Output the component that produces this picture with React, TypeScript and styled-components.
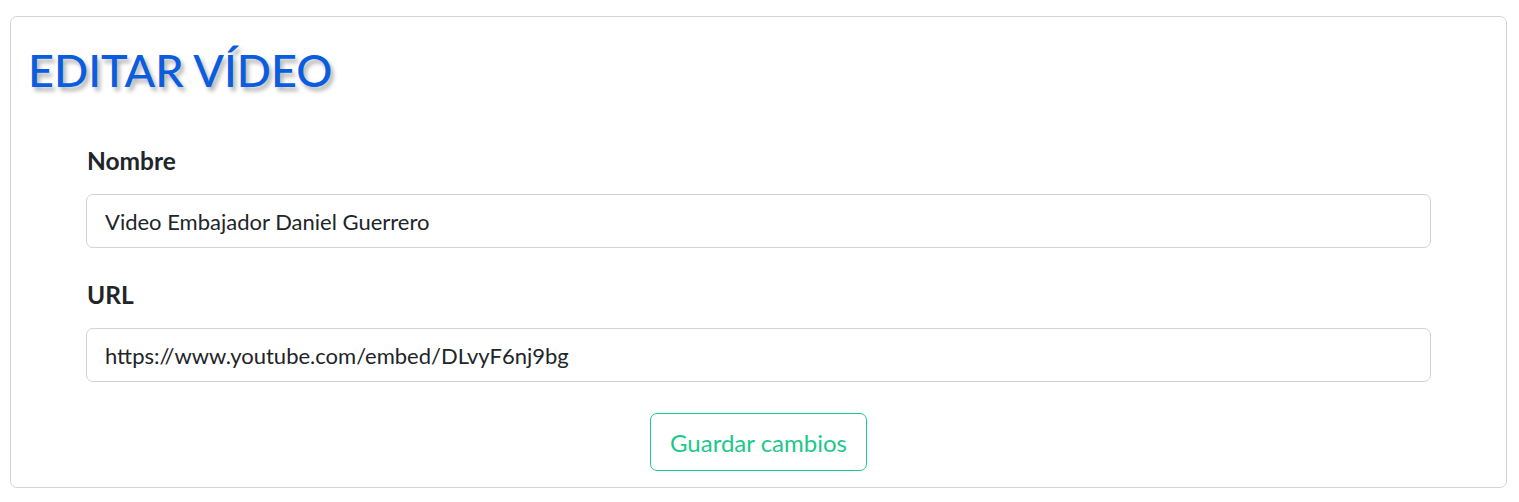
import React from "react";
import styled, { createGlobalStyle } from "styled-components";

const Global = createGlobalStyle`
  * { box-sizing: border-box; }
  body {
    margin: 0;
    background: #ffffff;
    font-family: "Lato", "Noto Sans", sans-serif;
    color: #212529;
  }
`;

const Page = styled.div`
  padding: 16px 12px 15px 10px;
`;

const Card = styled.div`
  border: 1px solid #d4d4d4;
  border-radius: 7px;
  background: #fff;
  padding: 26px 0 16px 0;
`;

const Title = styled.h1`
  margin: 0 0 0 17px;
  font-size: 45px;
  font-weight: 500;
  line-height: 1.2;
  color: #0b5ddf;
  text-shadow: 3px 4px 4px rgba(0, 0, 0, 0.3);
`;

const Form = styled.form`
  display: flex;
  flex-direction: column;
  gap: 32px;
  padding: 49px 75px 0 75px;
`;

const Field = styled.div`
  display: flex;
  flex-direction: column;
  gap: 19px;
`;

const Label = styled.label`
  font-size: 24.5px;
  font-weight: 700;
  color: #212529;
  line-height: 29px;
  padding-left: 1px;
`;

const Input = styled.input`
  height: 54px;
  padding: 0 18px;
  font-family: inherit;
  font-size: 22px;
  color: #212529;
  border: 1px solid #ced4da;
  border-radius: 7px;
  background: #fff;
  outline: none;
`;

const Actions = styled.div`
  display: flex;
  justify-content: center;
  margin-top: -1px;
`;

const Button = styled.button`
  height: 58px;
  padding: 0 19px;
  font-family: inherit;
  font-size: 24px;
  color: #1cc88a;
  background: #fff;
  border: 1px solid #1cc88a;
  border-radius: 7px;
  cursor: pointer;
`;

export default function App() {
  return (
    <>
      <Global />
      <Page>
        <Card>
          <Title>EDITAR VÍDEO</Title>
          <Form onSubmit={(e) => e.preventDefault()}>
            <Field>
              <Label htmlFor="nombre">Nombre</Label>
              <Input id="nombre" defaultValue="Video Embajador Daniel Guerrero" />
            </Field>
            <Field>
              <Label htmlFor="url">URL</Label>
              <Input id="url" defaultValue="https://www.youtube.com/embed/DLvyF6nj9bg" />
            </Field>
            <Actions>
              <Button type="submit">Guardar cambios</Button>
            </Actions>
          </Form>
        </Card>
      </Page>
    </>
  );
}
